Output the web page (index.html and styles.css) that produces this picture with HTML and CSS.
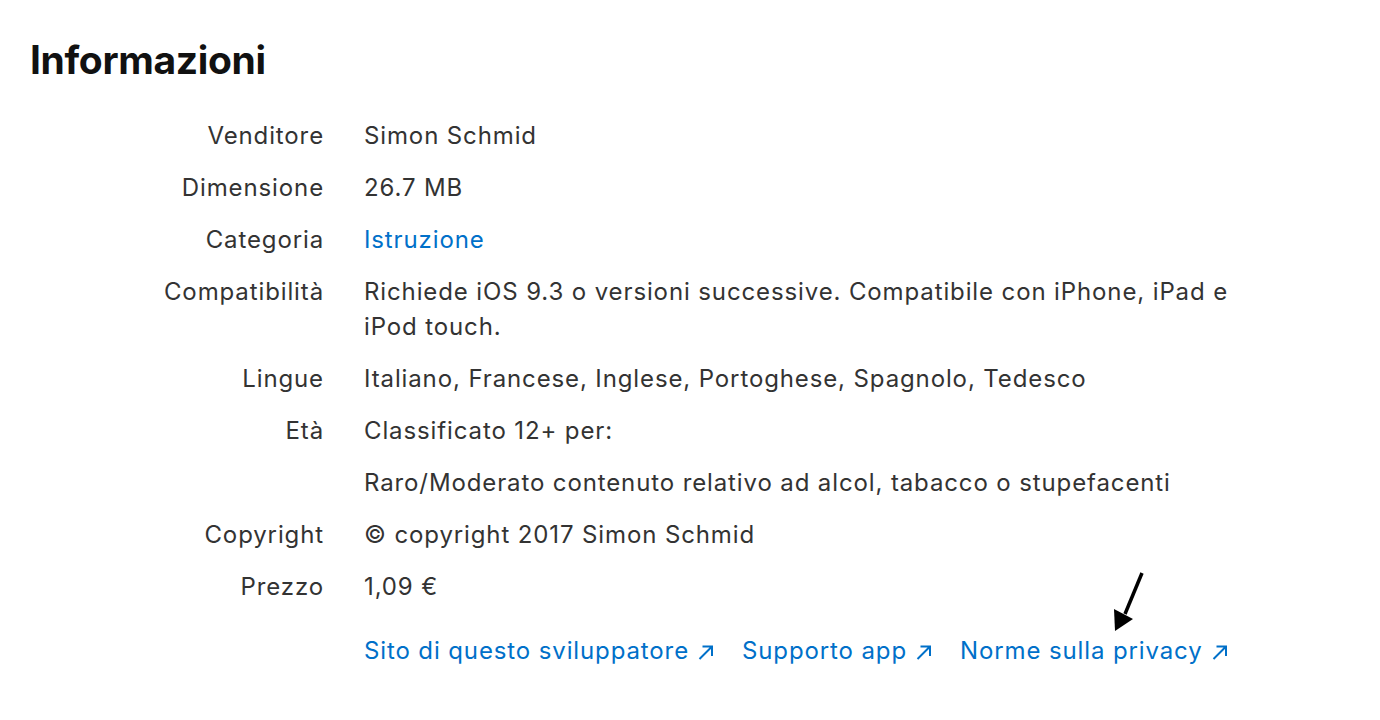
FILE: index.html
```html
<!DOCTYPE html>
<html lang="it">
<head>
<meta charset="utf-8">
<link rel="stylesheet" href="styles.css">
</head>
<body>
<section class="info">
  <h2 class="title">Informazioni</h2>
  <dl class="rows">
    <div class="row"><dt>Venditore</dt><dd>Simon Schmid</dd></div>
    <div class="row"><dt>Dimensione</dt><dd>26.7 MB</dd></div>
    <div class="row"><dt>Categoria</dt><dd><a class="link" href="#">Istruzione</a></dd></div>
    <div class="row"><dt>Compatibilità</dt><dd>Richiede iOS 9.3 o versioni successive. Compatibile con iPhone, iPad e iPod touch.</dd></div>
    <div class="row"><dt>Lingue</dt><dd>Italiano, Francese, Inglese, Portoghese, Spagnolo, Tedesco</dd></div>
    <div class="row"><dt>Età</dt><dd><p class="line">Classificato 12+ per:</p><p class="line">Raro/Moderato contenuto relativo ad alcol, tabacco o stupefacenti</p></dd></div>
    <div class="row"><dt>Copyright</dt><dd>© copyright 2017 Simon Schmid</dd></div>
    <div class="row"><dt>Prezzo</dt><dd>1,09 €</dd></div>
  </dl>
  <div class="links">
    <a class="link ext" href="#">Sito di questo sviluppatore<svg class="arr" width="15" height="15" viewBox="0 0 15 15" aria-hidden="true"><path d="M1.5 14 L14 1.5 M4.5 1.5 H14 V11" fill="none" stroke="currentColor" stroke-width="2"/></svg></a>
    <a class="link ext" href="#">Supporto app<svg class="arr" width="15" height="15" viewBox="0 0 15 15" aria-hidden="true"><path d="M1.5 14 L14 1.5 M4.5 1.5 H14 V11" fill="none" stroke="currentColor" stroke-width="2"/></svg></a>
    <a class="link ext" href="#">Norme sulla privacy<svg class="arr" width="15" height="15" viewBox="0 0 15 15" aria-hidden="true"><path d="M1.5 14 L14 1.5 M4.5 1.5 H14 V11" fill="none" stroke="currentColor" stroke-width="2"/></svg></a>
  </div>
  <svg class="pointer" width="40" height="70" viewBox="0 0 40 70" aria-hidden="true">
    <line x1="34" y1="5" x2="17" y2="46" stroke="#000" stroke-width="3.5"/>
    <polygon points="6,41 25,51 7,63" fill="#000"/>
  </svg>
</section>
</body>
</html>
```
FILE: styles.css
```css
html, body { margin: 0; padding: 0; background: #fff; }
body {
  font-family: Inter, "Noto Sans", "Liberation Sans", sans-serif;
  color: #333;
  -webkit-font-smoothing: antialiased;
}
.info {
  position: relative;
  padding: 37px 30px 0 30px;
}
.title {
  margin: 0 0 35px 0;
  font-size: 39px;
  font-weight: 700;
  color: #111;
  letter-spacing: -0.35px;
  line-height: 46px;
}
.rows {
  margin: 0;
  display: flex;
  flex-direction: column;
  gap: 17px;
}
.row {
  display: grid;
  grid-template-columns: 294px 880px;
  column-gap: 40px;
  font-size: 24px;
  letter-spacing: 0.88px;
  line-height: 35px;
}
.row dt {
  text-align: right;
}
.row dd {
  margin: 0;
  display: flex;
  flex-direction: column;
  gap: 17px;
}
.line { margin: 0; }
.link {
  color: #0070c9;
  text-decoration: none;
}
.links {
  margin: 29px 0 0 334px;
  display: flex;
  gap: 29px;
  font-size: 24px;
  letter-spacing: 0.88px;
  line-height: 35px;
}
.ext {
  display: inline-flex;
  align-items: center;
  gap: 9px;
}
.arr { flex: none; margin-top: 3px; }
.pointer {
  position: absolute;
  left: 1108px;
  top: 568px;
}
```
